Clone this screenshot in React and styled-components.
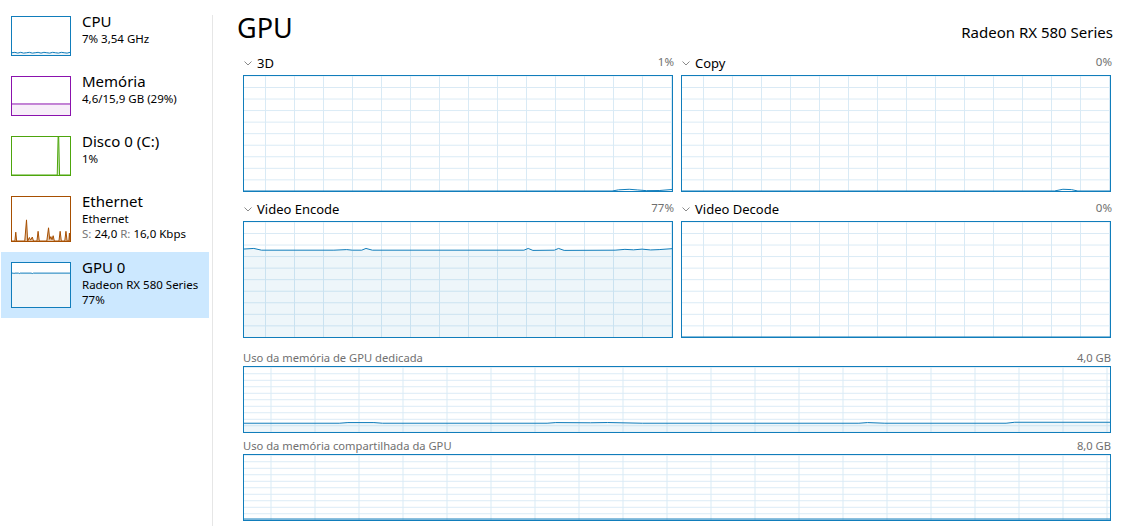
import React from 'react';
import styled, { createGlobalStyle } from 'styled-components';

const GlobalStyle = createGlobalStyle`
    html, body {
        margin: 0;
        padding: 0;
        background: #fff;
    }
    body {
        font-family: "Noto Sans", "Open Sans", sans-serif;
        color: #000;
        overflow: hidden;
    }
`;

const BLUE = '#117dbb';

const Dim = styled.span`
    color: #767676;
`;

// builds line + area paths in a 0..100 box, usage measured from the bottom
const Chart = ({ points, color, fill }) => {
    const line = points.map(([x, u], i) => `${i ? 'L' : 'M'}${x},${100 - u}`).join(' ');
    const area = `${line} L100,100 L0,100 Z`;
    return (
        <ChartSvg viewBox="0 0 100 100" preserveAspectRatio="none">
            <path d={area} fill={fill} stroke="none" />
            <path d={line} fill="none" stroke={color} strokeWidth="1" vectorEffect="non-scaling-stroke" />
        </ChartSvg>
    );
};

const Chevron = () => (
    <svg width="8" height="5" viewBox="0 0 8 5">
        <polyline points="0.5,0.5 4,4 7.5,0.5" fill="none" stroke="#8a8a8a" strokeWidth="1" />
    </svg>
);

const sideItems = [
    {
        title: 'CPU',
        lines: ['7% 3,54 GHz'],
        color: BLUE,
        fill: 'rgba(17,125,187,0.08)',
        points: [[0, 6], [5, 7], [10, 5], [15, 7], [20, 5], [25, 6], [30, 7], [35, 5], [40, 6], [45, 7], [50, 5], [55, 7], [60, 6], [65, 5], [70, 7], [75, 6], [80, 5], [85, 7], [90, 6], [95, 5], [100, 7]],
    },
    {
        title: 'Memória',
        lines: ['4,6/15,9 GB (29%)'],
        color: '#8b12ae',
        fill: 'rgba(139,18,174,0.07)',
        points: [[0, 29], [100, 29]],
    },
    {
        title: 'Disco 0 (C:)',
        lines: ['1%'],
        color: '#4da60c',
        fill: 'rgba(77,166,12,0.25)',
        points: [[0, 0], [78, 0], [79.5, 100], [80.5, 100], [82, 0], [100, 0]],
    },
    {
        title: 'Ethernet',
        lines: ['Ethernet', <><Dim>S:</Dim> 24,0 <Dim>R:</Dim> 16,0 Kbps</>],
        color: '#a74f01',
        fill: 'rgba(167,79,1,0.35)',
        tall: true,
        points: [
            [0, 0], [5, 0], [6.5, 20], [8, 0], [22, 0], [25, 48], [27, 0], [30, 8], [32, 2], [35, 9], [37, 0],
            [43, 0], [45, 22], [47, 0], [60, 0], [63, 30], [65, 4], [67, 10], [69, 3], [71, 12], [73, 0],
            [81, 0], [83, 22], [85, 0], [91, 0], [93, 22], [95, 0], [98, 0], [99, 18], [100, 0],
        ],
    },
    {
        title: 'GPU 0',
        lines: ['Radeon RX 580 Series', '77%'],
        color: BLUE,
        fill: 'rgba(17,125,187,0.07)',
        tall: true,
        selected: true,
        points: [[0, 77], [2, 77], [3.5, 76], [5, 77], [11, 77], [12.5, 76], [14, 77], [33, 77], [35, 76], [37, 77], [100, 77]],
    },
];

const veBumps = [
    [0, 76.5], [2.3, 77], [4.1, 75.5], [21, 75.5], [24, 76], [25.3, 75.5], [27.5, 75.5], [28.5, 77], [30, 75.5],
    [65.4, 75.5], [66.4, 77], [67.5, 75.3], [72.5, 75.5], [73.5, 77], [74.8, 75.3], [86.7, 75.5], [89, 76.2],
    [91, 75.8], [93, 76.4], [95, 75.7], [97, 76], [100, 76.8],
];

const engines = [
    { name: '3D', value: '1%', points: [[0, 0], [86, 0], [87.5, 1], [90, 1.5], [92, 0.9], [94, 0.3], [97, 0.4], [100, 1.3]] },
    { name: 'Copy', value: '0%', points: [[0, 0], [87, 0], [89, 1.5], [91, 1.2], [92.5, 0], [100, 0]] },
    { name: 'Video Encode', value: '77%', points: veBumps, fill: 'rgba(17,125,187,0.07)' },
    { name: 'Video Decode', value: '0%', points: [[0, 0], [100, 0]] },
];

const memories = [
    {
        name: 'Uso da memória de GPU dedicada',
        value: '4,0 GB',
        points: [[0, 13.5], [11, 13.5], [12, 14.5], [15, 14.5], [16, 13.5], [35, 13.5], [36, 14.5], [40, 14.2], [42, 14.6], [46, 13.5], [71, 13.5], [72, 14.5], [74, 13.5], [88, 13.5], [89, 15], [100, 15]],
    },
    { name: 'Uso da memória compartilhada da GPU', value: '8,0 GB', points: [[0, 1.5], [100, 1.5]] },
];

const App = () => {
    return (
        <>
            <GlobalStyle />
            <Window>
                <Sidebar>
                    {sideItems.map((it) => (
                        <SideItem key={it.title} $selected={it.selected}>
                            <Thumb $color={it.color} $tall={it.tall}>
                                <Chart points={it.points} color={it.color} fill={it.fill} />
                            </Thumb>
                            <SideText>
                                <SideTitle>{it.title}</SideTitle>
                                {it.lines.map((l, i) => (
                                    <SideLine key={i}>{l}</SideLine>
                                ))}
                            </SideText>
                        </SideItem>
                    ))}
                </Sidebar>
                <Divider />
                <Main>
                    <Header>
                        <Title>GPU</Title>
                        <Adapter>Radeon RX 580 Series</Adapter>
                    </Header>
                    <EngineGrid>
                        {engines.map((e) => (
                            <div key={e.name}>
                                <EngineHead>
                                    <EngineName>
                                        <Chevron />
                                        {e.name}
                                    </EngineName>
                                    <Pct>{e.value}</Pct>
                                </EngineHead>
                                <GraphBox $h={117} $col={29} $row={11.55} $ox={21} $oy={11}>
                                    <Chart points={e.points} color={BLUE} fill={e.fill || 'none'} />
                                </GraphBox>
                            </div>
                        ))}
                    </EngineGrid>
                    <MemoryList>
                        {memories.map((m) => (
                            <div key={m.name}>
                                <MemHead>
                                    <span>{m.name}</span>
                                    <span>{m.value}</span>
                                </MemHead>
                                <GraphBox $h={67} $col={44} $row={6.5} $ox={26.5} $oy={6.3}>
                                    <Chart points={m.points} color={BLUE} fill="rgba(17,125,187,0.07)" />
                                </GraphBox>
                            </div>
                        ))}
                    </MemoryList>
                </Main>
            </Window>
        </>
    );
};

const Window = styled.div`
    display: flex;
    width: 1125px;
    height: 526px;
    background: #fff;
`;

const Sidebar = styled.nav`
    width: 212px;
    flex-shrink: 0;
    padding-top: 6px;
    box-sizing: border-box;
`;

const SideItem = styled.div`
    display: flex;
    align-items: flex-start;
    gap: 11px;
    width: 208px;
    margin-left: 1px;
    padding: 10px;
    box-sizing: border-box;
    background: ${(p) => (p.$selected ? '#cce8ff' : 'transparent')};
`;

const Thumb = styled.div`
    width: 60px;
    height: ${(p) => (p.$tall ? 46 : 40)}px;
    flex-shrink: 0;
    box-sizing: border-box;
    border: 1px solid ${(p) => p.$color};
    background: #fff;
`;

const ChartSvg = styled.svg`
    display: block;
    width: 100%;
    height: 100%;
`;

const SideText = styled.div`
    margin-top: -4px;
    display: flex;
    flex-direction: column;
`;

const SideTitle = styled.div`
    font-size: 15px;
    line-height: 19px;
`;

const SideLine = styled.div`
    font-size: 11.5px;
    line-height: 15px;
    white-space: nowrap;
`;

const Divider = styled.div`
    width: 1px;
    margin-top: 15px;
    background: #e6e6e6;
    flex-shrink: 0;
`;

const Main = styled.main`
    flex: 1;
    padding: 12px 14px 0 30px;
    box-sizing: border-box;
    display: flex;
    flex-direction: column;
`;

const Header = styled.header`
    display: flex;
    justify-content: space-between;
    align-items: baseline;
    margin: 0 -2px 11px -6px;
`;

const Title = styled.h1`
    margin: 0;
    font-weight: 400;
    font-size: 27px;
    line-height: 32px;
`;

const Adapter = styled.div`
    font-size: 15px;
`;

const EngineGrid = styled.div`
    display: grid;
    grid-template-columns: 1fr 1fr;
    column-gap: 8px;
    row-gap: 9px;
`;

const EngineHead = styled.div`
    display: flex;
    justify-content: space-between;
    align-items: baseline;
    height: 20px;
    line-height: 14px;
    padding: 0 0 0 1px;
`;

const EngineName = styled.div`
    display: flex;
    align-items: center;
    gap: 5px;
    font-size: 13px;
    svg {
        margin-top: 1px;
    }
`;

const Pct = styled.span`
    font-size: 11.5px;
    color: #6f6f6f;
    margin-right: -1px;
`;

const GraphBox = styled.div`
    height: ${(p) => p.$h}px;
    box-sizing: border-box;
    border: 1px solid ${BLUE};
    background-color: #fff;
    background-image:
        linear-gradient(to right, #d9eaf5 1px, transparent 1px),
        linear-gradient(to bottom, #d9eaf5 1px, transparent 1px);
    background-size: ${(p) => `${p.$col}px ${p.$row}px`};
    background-position: ${(p) => `${p.$ox}px ${p.$oy}px`};
`;

const MemoryList = styled.div`
    display: flex;
    flex-direction: column;
    gap: 5px;
    margin-top: 12px;
`;

const MemHead = styled.div`
    display: flex;
    justify-content: space-between;
    align-items: flex-end;
    height: 16px;
    font-size: 11.2px;
    line-height: 13px;
    color: #707070;
    padding-bottom: 2px;
    box-sizing: border-box;
`;

export default App;
